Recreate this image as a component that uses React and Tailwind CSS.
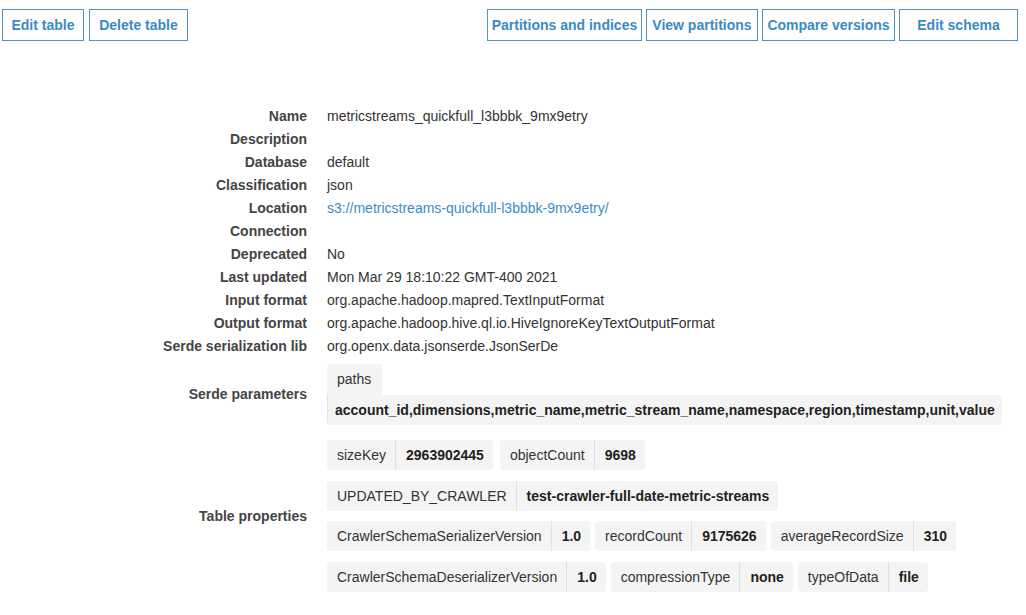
import React from "react";

const font = { fontFamily: '"Liberation Sans", Arial, Helvetica, sans-serif' };

function Btn({ children, w }) {
  return (
    <button
      className={`h-[32px] ${w} border border-[#5294b9] bg-white text-[14px] font-bold text-[#3a8bc4] leading-none flex items-center justify-center`}
    >
      {children}
    </button>
  );
}

function Row({ label, children }) {
  return (
    <div className="flex leading-[23px] text-[14px]">
      <div className="w-[307px] shrink-0 text-right font-bold text-[#444]">{label}</div>
      <div className="ml-5 text-[#333]">{children}</div>
    </div>
  );
}

function Chip({ k, v }) {
  return (
    <div className="flex h-[30px] rounded-[4px] bg-[#f4f4f4] text-[14px] leading-[30px] text-[#333]">
      <div className="pl-[10px] pr-[9px]">{k}</div>
      <div className="border-l border-[#e0e0e0] pl-[10px] pr-[9px] font-bold text-[#222]">{v}</div>
    </div>
  );
}

export default function App() {
  return (
    <div className="min-h-[615px] w-[1026px] bg-white" style={font}>
      <div className="flex justify-between pt-[9px] pl-[2px] pr-[8px]">
        <div className="flex gap-[5px]">
          <Btn w="w-[82px]">Edit table</Btn>
          <Btn w="w-[99px]">Delete table</Btn>
        </div>
        <div className="flex gap-[4px]">
          <Btn w="w-[155px]">Partitions and indices</Btn>
          <Btn w="w-[112px]">View partitions</Btn>
          <Btn w="w-[133px]">Compare versions</Btn>
          <Btn w="w-[119px]">Edit schema</Btn>
        </div>
      </div>

      <div className="mt-[64px] flex flex-col">
        <Row label="Name">metricstreams_quickfull_l3bbbk_9mx9etry</Row>
        <Row label="Description"></Row>
        <Row label="Database">default</Row>
        <Row label="Classification">json</Row>
        <Row label="Location">
          <span className="text-[#3a8dc6]">s3://metricstreams-quickfull-l3bbbk-9mx9etry/</span>
        </Row>
        <Row label="Connection"></Row>
        <Row label="Deprecated">No</Row>
        <Row label="Last updated">Mon Mar 29 18:10:22 GMT-400 2021</Row>
        <Row label="Input format">org.apache.hadoop.mapred.TextInputFormat</Row>
        <Row label="Output format">org.apache.hadoop.hive.ql.io.HiveIgnoreKeyTextOutputFormat</Row>
        <Row label="Serde serialization lib">org.openx.data.jsonserde.JsonSerDe</Row>

        <div className="mt-[6px] flex items-center text-[14px]">
          <div className="w-[307px] shrink-0 text-right font-bold text-[#444]">Serde parameters</div>
          <div className="ml-5 flex flex-col">
            <div className="h-[31px] w-[55px] rounded-t-[4px] bg-[#f4f4f4] pl-[10px] leading-[31px] text-[#333]">
              paths
            </div>
            <div className="h-[30px] w-[675px] rounded-r-[4px] rounded-bl-[4px] border-l border-[#e4e4e4] bg-[#f4f4f4] pl-[7px] font-bold leading-[30px] text-[#222]">
              account_id,dimensions,metric_name,metric_stream_name,namespace,region,timestamp,unit,value
            </div>
          </div>
        </div>

        <div className="mt-[15px] flex items-center text-[14px]">
          <div className="w-[307px] shrink-0 text-right font-bold text-[#444]">Table properties</div>
          <div className="ml-5 flex flex-col gap-y-[10.7px]">
            <div className="flex gap-[7px]">
              <Chip k="sizeKey" v="2963902445" />
              <Chip k="objectCount" v="9698" />
            </div>
            <div className="flex gap-[6px]">
              <Chip k="UPDATED_BY_CRAWLER" v="test-crawler-full-date-metric-streams" />
            </div>
            <div className="flex gap-[5px]">
              <Chip k="CrawlerSchemaSerializerVersion" v="1.0" />
              <Chip k="recordCount" v="9175626" />
              <Chip k="averageRecordSize" v="310" />
            </div>
            <div className="flex gap-[5px]">
              <Chip k="CrawlerSchemaDeserializerVersion" v="1.0" />
              <Chip k="compressionType" v="none" />
              <Chip k="typeOfData" v="file" />
            </div>
          </div>
        </div>
      </div>
    </div>
  );
}
